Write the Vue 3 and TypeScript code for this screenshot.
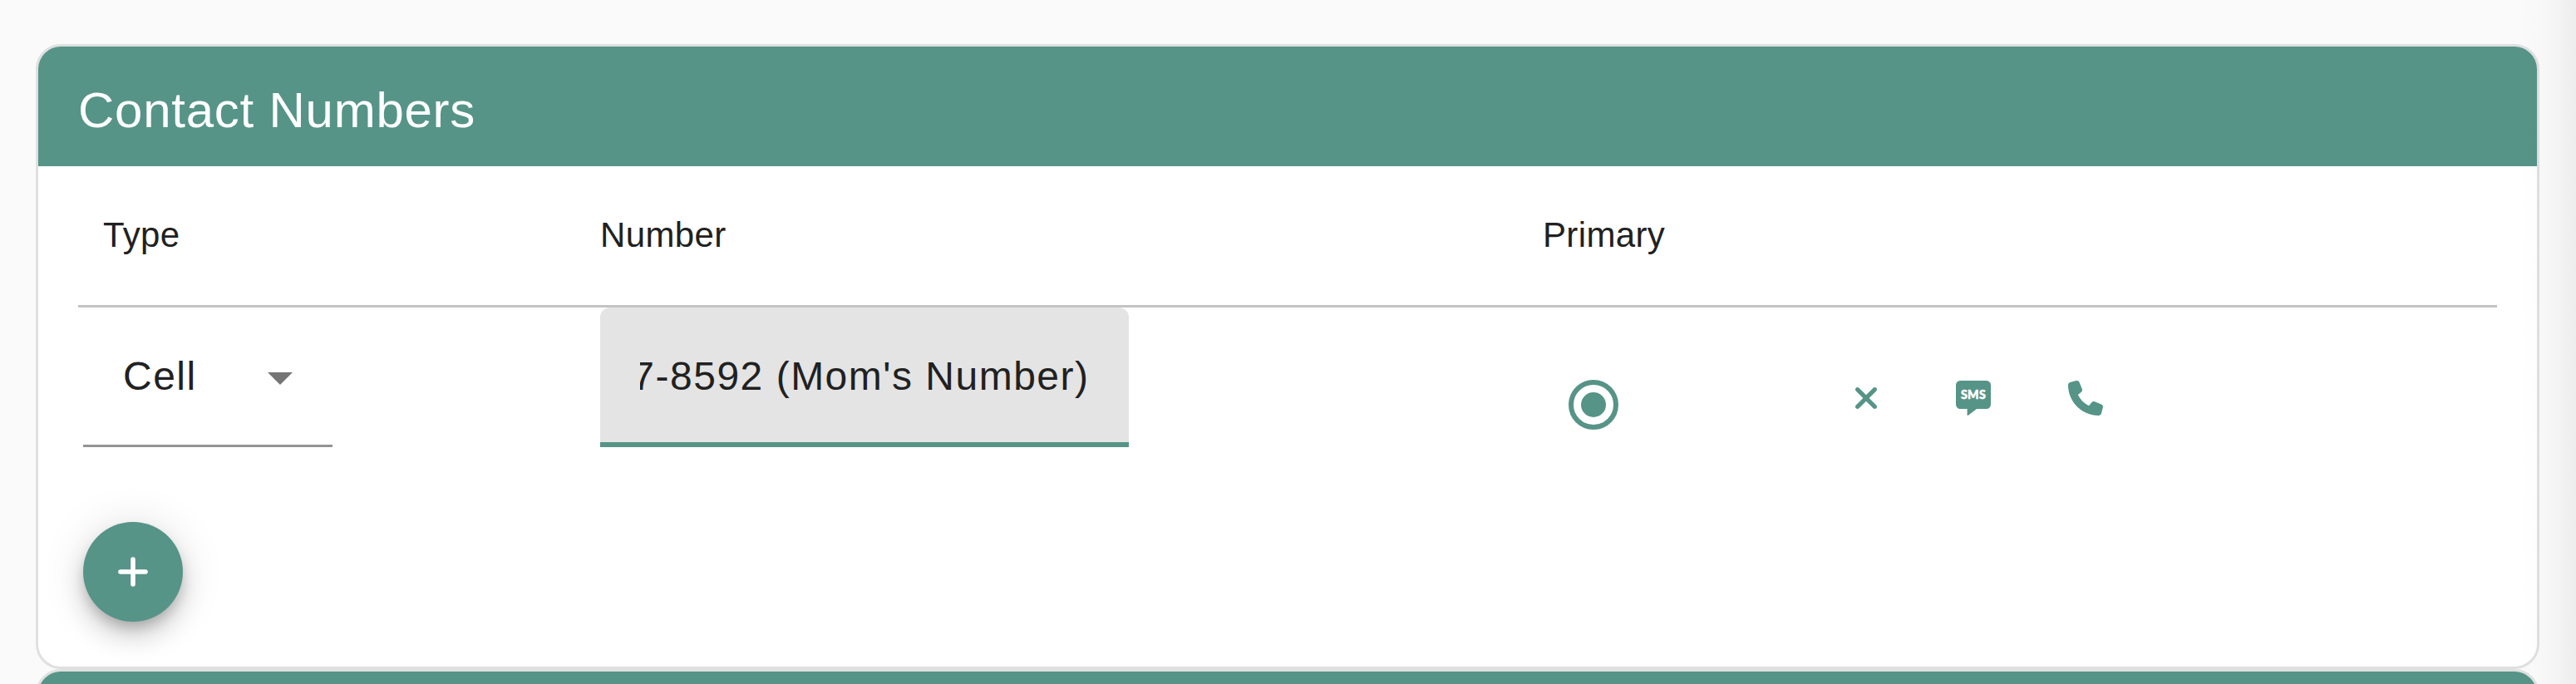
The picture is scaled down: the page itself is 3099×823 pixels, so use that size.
<script setup lang="ts">
import { ref } from 'vue'

interface ContactNumber {
  id: number
  type: string
  number: string
  primary: boolean
}

const columns: string[] = ['Type', 'Number', 'Primary', '']
const contacts = ref<ContactNumber[]>([
  { id: 1, type: 'Cell', number: "7-8592 (Mom's Number)", primary: true },
])
</script>

<template>
  <main class="page">
    <section class="card">
      <header class="card-header"><h2>Contact Numbers</h2></header>
      <div class="card-body">
        <div class="row head">
          <div v-for="(column, i) in columns" :key="i" class="cell">{{ column }}</div>
        </div>
        <div v-for="contact in contacts" :key="contact.id" class="row entry">
          <div class="type-cell">
            <div class="select">
              <span>{{ contact.type }}</span>
              <svg class="arrow" viewBox="0 0 30 15"><path d="M0 0h30L15 15z" /></svg>
            </div>
          </div>
          <div class="number-cell">
            <div class="field">
              <div class="field-view"><span>{{ contact.number }}</span></div>
            </div>
          </div>
          <div class="radio-cell">
            <span class="radio" :class="{ checked: contact.primary }"></span>
          </div>
          <div class="actions">
            <svg class="close" viewBox="0 0 320 512">
              <path d="M310.6 150.6c12.5-12.5 12.5-32.8 0-45.3s-32.8-12.5-45.3 0L160 210.7 54.6 105.4c-12.5-12.5-32.8-12.5-45.3 0s-12.5 32.8 0 45.3L114.7 256 9.4 361.4c-12.5 12.5-12.5 32.8 0 45.3s32.8 12.5 45.3 0L160 301.3 265.4 406.6c12.5 12.5 32.8 12.5 45.3 0s12.5-32.8 0-45.3L205.3 256 310.6 150.6z" />
            </svg>
            <svg class="sms" viewBox="0 0 42 42">
              <path d="M5.2 0h31.6A5.2 5.2 0 0 1 42 5.2v23.6a5.2 5.2 0 0 1-5.2 5.2H25L14.8 41.8c-.6.4-1.2.1-1.2-.6V34H5.2A5.2 5.2 0 0 1 0 28.8V5.2A5.2 5.2 0 0 1 5.2 0z" />
              <text x="21" y="22.3" text-anchor="middle">SMS</text>
            </svg>
            <svg class="phone" viewBox="0 0 512 512">
              <path d="M164.9 24.6c-7.7-18.6-28-28.5-47.4-23.2l-88 24C12.1 30.2 0 46 0 64C0 311.4 200.6 512 448 512c18 0 33.8-12.1 38.6-29.5l24-88c5.3-19.4-4.6-39.7-23.2-47.4l-96-40c-16.3-6.8-35.2-2.1-46.3 11.6L304.7 368C234.3 334.7 177.3 277.7 144 207.3L193.3 167c13.7-11.2 18.4-30 11.6-46.3l-40-96z" />
            </svg>
          </div>
        </div>
        <button class="fab" type="button" aria-label="Add contact number">
          <svg viewBox="0 0 36 36"><path d="M18 3v30M3 18h30" /></svg>
        </button>
      </div>
    </section>
    <section class="card">
      <header class="card-header"></header>
    </section>
    <div class="edge-shade"></div>
  </main>
</template>

<style>
body {
  margin: 0;
  background: #fafafa;
}
</style>

<style scoped>
.page {
  position: relative;
  box-sizing: border-box;
  height: 823px;
  padding: 53px 44px 0 43px;
  overflow: hidden;
  background: #fafafa;
  color: #212121;
  font-family: "Liberation Sans", Arial, sans-serif;
}
.card {
  box-sizing: border-box;
  height: 752px;
  border: 3px solid #e0e0e0;
  border-radius: 30px;
  background: #fff;
  overflow: hidden;
}
.card-header {
  display: flex;
  align-items: center;
  box-sizing: border-box;
  height: 144px;
  padding: 10px 48px 0;
  background: #569487;
  color: #fff;
}
h2 {
  margin: 0;
  font-size: 60px;
  font-weight: 400;
  line-height: 72px;
  letter-spacing: 0.75px;
}
.card-body {
  padding: 0 48px;
}
.row {
  display: grid;
  grid-template-columns: 598px 1134px 360px 1fr;
}
.head {
  height: 167px;
  border-bottom: 3px solid #c4c4c4;
}
.cell {
  padding-left: 30px;
  font-size: 42px;
  line-height: 165px;
  letter-spacing: 0.35px;
}
.entry {
  height: 168px;
  font-size: 48px;
  line-height: 56px;
  letter-spacing: 1.5px;
}
.type-cell {
  padding-left: 6px;
}
.select {
  display: flex;
  align-items: center;
  justify-content: space-between;
  box-sizing: border-box;
  width: 300px;
  height: 168px;
  padding: 0 48px;
  border-bottom: 3px solid #949494;
}
.arrow {
  width: 30px;
  height: 15px;
  margin-top: 6px;
  fill: #757575;
}
.number-cell {
  padding-left: 30px;
}
.field {
  display: flex;
  align-items: center;
  box-sizing: border-box;
  width: 636px;
  height: 168px;
  padding: 0 48px 3px;
  border-radius: 12px 12px 0 0;
  background: linear-gradient(#569487, #569487) bottom / 100% 6px no-repeat #e4e4e4;
}
.field-view {
  display: flex;
  justify-content: flex-end;
  width: 540px;
  overflow: hidden;
  white-space: nowrap;
}
.field-view span {
  margin-right: -0.5px;
}
.radio-cell {
  padding: 87px 0 0 61px;
}
.radio {
  display: grid;
  place-items: center;
  box-sizing: border-box;
  width: 60px;
  height: 60px;
  border: 6px solid #569487;
  border-radius: 50%;
}
.radio.checked::after {
  content: "";
  width: 30px;
  height: 30px;
  border-radius: 50%;
  background: #569487;
}
.actions {
  display: flex;
  align-items: flex-start;
  padding: 88px 0 0 46px;
  fill: #569487;
}
.actions svg {
  height: 42px;
}
.close {
  width: 26px;
}
.sms {
  width: 42px;
  margin-left: 95px;
}
.sms text {
  fill: #fff;
  stroke: #fff;
  stroke-width: 0.5px;
  stroke-linejoin: round;
  font-family: Lato, "Liberation Sans", sans-serif;
  font-size: 14.2px;
  font-weight: 900;
  letter-spacing: 0.3px;
}
.phone {
  width: 42px;
  margin-left: 93px;
}
.fab {
  display: grid;
  place-items: center;
  width: 120px;
  height: 120px;
  margin: 90px 0 0 6px;
  padding: 0;
  border: 0;
  border-radius: 50%;
  background: #569487;
  box-shadow: 0 9px 15px -3px rgba(0, 0, 0, 0.2), 0 18px 30px rgba(0, 0, 0, 0.14),
    0 3px 54px rgba(0, 0, 0, 0.12);
}
.fab svg {
  width: 36px;
  height: 36px;
  fill: none;
  stroke: #fff;
  stroke-width: 5.6px;
  stroke-linecap: round;
}
.edge-shade {
  position: absolute;
  top: 0;
  right: 0;
  width: 70px;
  height: 100%;
  background: linear-gradient(to right, rgba(0, 0, 0, 0), rgba(0, 0, 0, 0.008) 35%, rgba(0, 0, 0, 0.02) 60%, rgba(0, 0, 0, 0.05));
}
</style>
